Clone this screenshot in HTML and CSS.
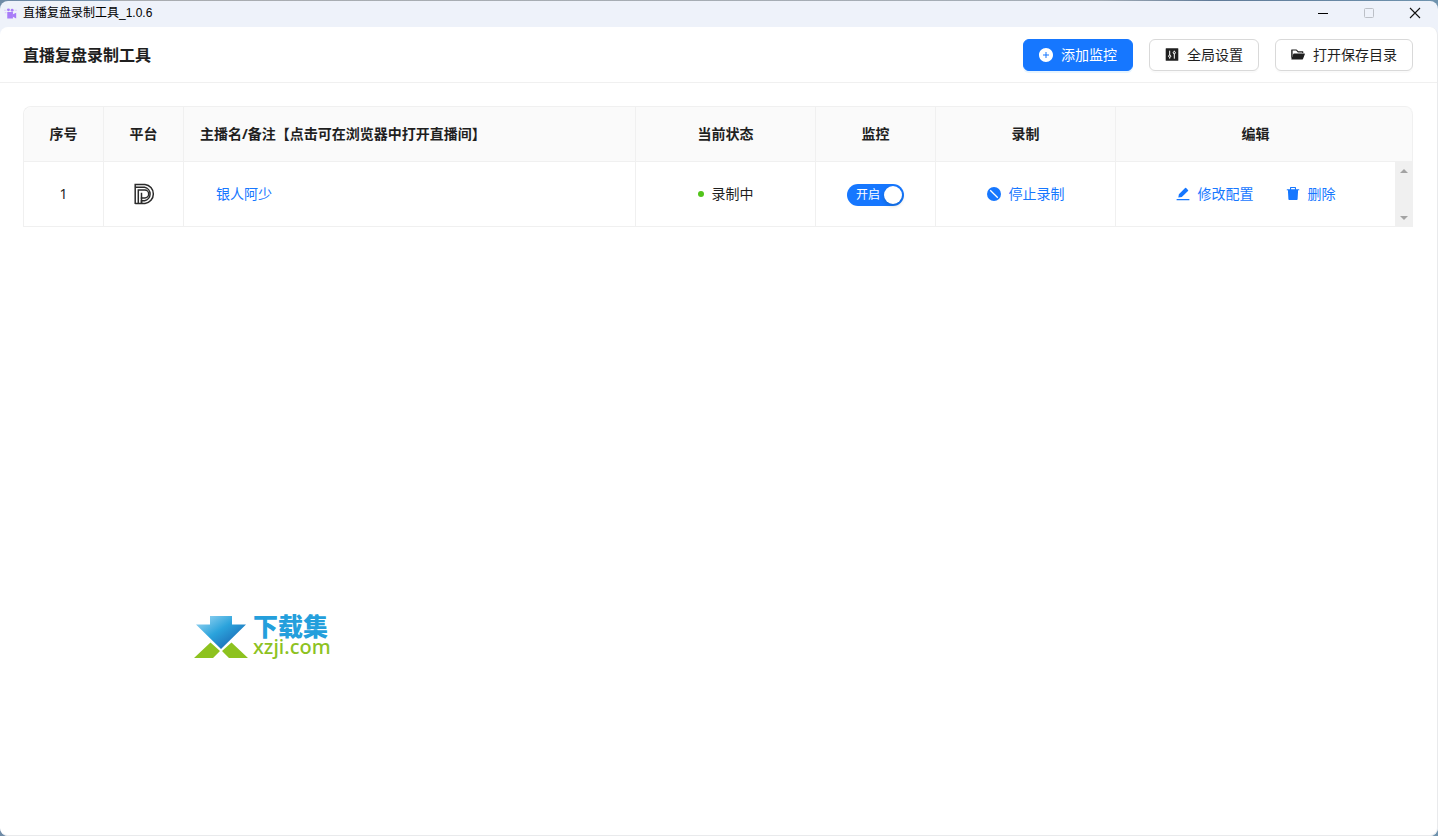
FILE: index.html
```html
<!DOCTYPE html>
<html lang="zh-CN">
<head>
<meta charset="utf-8">
<title>直播复盘录制工具</title>
<link rel="stylesheet" href="styles.css">
</head>
<body>
<div class="window">
  <div class="titlebar">
    <svg class="app-icon" viewBox="0 0 16 16" aria-hidden="true">
      <g fill="#a87cf8"><path d="M4 6h7v8H4z"/><path d="M11 9l4-2v7l-4-2z"/><circle cx="5.500" cy="3.500" r="1.800"/><circle cx="10" cy="4" r="1.800"/></g>
      <path d="M0 4h3M1 7h2M13 4h3" stroke="#dccdfc" stroke-width="1.500"/>
    </svg>
    <span class="titlebar-text">直播复盘录制工具_1.0.6</span>
    <div class="window-controls">
      <button type="button" aria-label="最小化"><svg viewBox="0 0 10 10"><path d="M0 5.500h10" stroke="#000"/></svg></button>
      <button type="button" aria-label="最大化" disabled><svg viewBox="0 0 10 10"><rect x=".5" y=".5" width="9" height="9" rx="1" fill="none" stroke="#bcc0c7"/></svg></button>
      <button type="button" aria-label="关闭"><svg viewBox="0 0 10 10"><path d="M0 0l10 10M10 0L0 10" stroke="#111" stroke-width="1.100"/></svg></button>
    </div>
  </div>
  <main class="page">
    <header class="header">
      <h1>直播复盘录制工具</h1>
      <div class="actions">
        <button type="button" class="btn btn-primary">
          <svg class="icon" viewBox="64 64 896 896"><path d="M512 64C264.600 64 64 264.600 64 512s200.600 448 448 448 448-200.600 448-448S759.400 64 512 64zm192 472c0 4.400-3.600 8-8 8H544v152c0 4.400-3.600 8-8 8h-48c-4.400 0-8-3.600-8-8V544H328c-4.400 0-8-3.600-8-8v-48c0-4.400 3.600-8 8-8h152V328c0-4.400 3.600-8 8-8h48c4.400 0 8 3.600 8 8v152h152c4.400 0 8 3.600 8 8v48z"/></svg>
          <span>添加监控</span>
        </button>
        <button type="button" class="btn">
          <svg class="icon" viewBox="0 0 14 14"><rect x=".7" y=".2" width="12.600" height="12.600" rx=".5"/><path d="M4.700 2.700v8M9.300 2.700v8" stroke="#fff"/><circle cx="4.700" cy="8.200" r="1.100" fill="#1f1f1f" stroke="#fff"/><circle cx="9.300" cy="4.700" r="1.100" fill="#1f1f1f" stroke="#fff"/></svg>
          <span>全局设置</span>
        </button>
        <button type="button" class="btn">
          <svg class="icon" viewBox="0 0 14 14"><path d="M.5 1.500h5l1.900 1.800h4.400q.5 0 .5.500v1.300h-1.100v-.7H6.900L5.100 2.600H1.600v5.400L.2 10.800V1.900q0-.4.300-.4z"/><path d="M2.800 5.600h10.700q.6 0 .4.500l-1.900 5q-.1.400-.6.400H.7q-.5 0-.3-.5l1.900-5q.1-.4.500-.4z"/></svg>
          <span>打开保存目录</span>
        </button>
      </div>
    </header>
    <section class="content">
      <table class="rooms">
        <colgroup>
          <col class="col-small"><col class="col-small"><col><col class="col-medium"><col class="col-switch"><col class="col-medium"><col class="col-edit"><col class="col-scroll">
        </colgroup>
        <thead>
          <tr><th>序号</th><th>平台</th><th class="name-head">主播名/备注【点击可在浏览器中打开直播间】</th><th>当前状态</th><th>监控</th><th>录制</th><th class="joined">编辑</th><td class="head-end"></td></tr>
        </thead>
        <tbody>
          <tr>
            <td>1</td>
            <td>
              <svg class="platform" viewBox="0 0 22 22" role="img" aria-label="平台图标" fill="none" stroke="#2b2b2b" stroke-width="1.500">
                <path d="M2.200 21V1.500H12a9.300 9.500 0 0 1 0 18.900H2.200"/>
                <path d="M2.200 4.300H11.600a6.600 6.800 0 0 1 0 13.400H8.500V20"/>
                <path d="M5.300 20V7.100h6.500a3.900 3.900 0 0 1 0 7.800H8.500V9.800"/>
                <path d="M8.500 14.500V20"/>
              </svg>
            </td>
            <td class="name-cell"><a href="#">银人阿少</a></td>
            <td><div class="status"><i class="dot"></i>录制中</div></td>
            <td><label class="switch"><input type="checkbox" role="switch" checked><span>开启</span></label></td>
            <td>
              <div class="row-actions">
                <button type="button" class="link">
                  <svg class="icon" viewBox="0 0 14 14"><circle cx="7" cy="7" r="7"/><path d="M3.200 3.200l7.600 7.600" stroke="#fff" stroke-width="1.300"/></svg>
                  <span>停止录制</span>
                </button>
              </div>
            </td>
            <td class="joined">
              <div class="row-actions">
                <button type="button" class="link">
                  <svg class="icon" viewBox="0 0 14 14"><path d="M.9 12h12.200q.3 0 .3.300v.9H.6v-.9q0-.3.300-.3z"/><path d="M2.300 10.600l.6-3.400L9.100 1q.5-.5 1 0l1.900 1.900q.5.500 0 1L5.800 10z"/></svg>
                  <span>修改配置</span>
                </button>
                <button type="button" class="link">
                  <svg class="icon" viewBox="0 0 14 14"><path d="M4 2.200V.7Q4 0 4.700 0h4.600q.7 0 .7.700v1.500h2.800q.5 0 .5.500v.6h-1.200l-.5 8.900q-.1.700-.8.700H3.200q-.7 0-.8-.7l-.5-8.900H.7v-.6q0-.5.500-.5zm1.100 0h3.800V1.100H5.100z"/></svg>
                  <span>删除</span>
                </button>
              </div>
            </td>
            <td class="scroll-cell">
              <div class="scrollbar" aria-hidden="true">
                <svg viewBox="0 0 8 4"><path d="M4 0l4 4H0z"/></svg>
                <svg viewBox="0 0 8 4"><path d="M0 0h8L4 4z"/></svg>
              </div>
            </td>
          </tr>
        </tbody>
      </table>
    </section>
  </main>
  <div class="watermark">
    <svg class="watermark-logo" viewBox="0 0 54 42" aria-hidden="true">
      <defs><linearGradient id="arrow" x1="0" y1="0" x2="1" y2="1"><stop offset="0" stop-color="#a8dcf5"/><stop offset=".45" stop-color="#2ba3dc"/><stop offset="1" stop-color="#1553a5"/></linearGradient></defs>
      <path d="M16 0h22v8.500h14L27 33 2 8.500h14z" fill="url(#arrow)"/>
      <path d="M0 42l16.500-15.500L26 35 19 42zM54 42L37.500 26.500 28 35l7 7z" fill="#8dc21f"/>
    </svg>
    <div class="watermark-text"><span class="watermark-name">下载集</span><span class="watermark-url">xzji.com</span></div>
  </div>
</div>
</body>
</html>
```
FILE: styles.css
```css
* { box-sizing: border-box; }
html, body { height: 100%; margin: 0; }
body {
  padding-top: 1px;
  background: linear-gradient(90deg, #6f8ba6 0, #7891aa 110px, #a9acb0 112px, #a4adb6 1100px, #607b98 1210px, #6f93ae 100%);
  color: #1f1f1f;
  font: 14px/22px "Noto Sans", "Noto Sans CJK SC", sans-serif;
}
button { font: inherit; color: inherit; cursor: pointer; }
.window {
  position: relative;
  display: flex;
  flex-direction: column;
  height: 100%;
  border-radius: 8px;
  background: #eef2fa;
  overflow: hidden;
}
.titlebar {
  display: flex;
  align-items: center;
  height: 26px;
  padding: 0 0 2px 4px;
  color: #000;
  font: 12px/24px "Liberation Sans", "Noto Sans CJK SC", sans-serif;
}
.app-icon { width: 13px; height: 13px; margin-right: 6px; }
.window-controls { display: flex; margin-left: auto; }
.window-controls button {
  display: flex;
  align-items: center;
  justify-content: center;
  width: 46px;
  height: 24px;
  padding: 0;
  border: 0;
  background: none;
}
.window-controls svg { width: 10px; height: 10px; overflow: visible; }
.page {
  flex: 1;
  border: solid #e9eaec;
  border-width: 0 1px 1px 0;
  border-radius: 8px;
  background: #fff;
}
.header {
  display: flex;
  align-items: center;
  justify-content: space-between;
  padding: 12px 24px 11px 23px;
  border-bottom: 1px solid #f0f0f0;
}
h1 { margin: 0; font-size: 16px; line-height: 24px; font-weight: 700; }
.actions { display: flex; gap: 16px; }
.btn {
  display: flex;
  align-items: center;
  gap: 8px;
  height: 32px;
  padding: 0 15px;
  border: 1px solid #d9d9d9;
  border-radius: 6px;
  background: #fff;
  box-shadow: 0 2px 0 rgba(0, 0, 0, .02);
}
.btn-primary {
  border-color: #1677ff;
  background: #1677ff;
  color: #fff;
  box-shadow: 0 2px 0 rgba(5, 145, 255, .1);
}
.icon { flex: none; width: 14px; height: 14px; fill: currentColor; }
.content { padding: 23px 24px 24px 23px; }
.rooms {
  width: 100%;
  table-layout: fixed;
  border: solid #f0f0f0;
  border-width: 1px 0 0 1px;
  border-spacing: 0;
  border-radius: 8px 8px 0 0;
}
.col-small { width: 80px; }
.col-medium { width: 180px; }
.col-switch { width: 120px; }
.col-edit { width: 279px; }
.col-scroll { width: 18px; }
.rooms th, .rooms td {
  padding: 0;
  border: solid #f0f0f0;
  border-width: 0 1px 1px 0;
  text-align: center;
  vertical-align: middle;
}
.rooms thead tr > * { height: 55px; background: #fafafa; font-weight: 700; }
.rooms tbody td { height: 65px; }
.rooms thead th:first-child { border-top-left-radius: 8px; }
.rooms .head-end { border-top-right-radius: 8px; }
.rooms .joined { border-right: 0; }
.rooms .name-head { padding-left: 16px; text-align: left; }
.rooms .name-cell { padding-left: 32px; text-align: left; }
a, .link { color: #1677ff; text-decoration: none; }
.platform { display: block; width: 22px; height: 22px; margin: 0 auto; }
.status { display: flex; align-items: center; justify-content: center; gap: 8px; }
.dot { width: 6px; height: 6px; border-radius: 50%; background: #52c41a; }
.switch {
  position: relative;
  display: flex;
  align-items: center;
  width: 57px;
  height: 22px;
  margin: 1px auto 0;
  padding-left: 9px;
  border-radius: 11px;
  background: #1677ff;
  color: #fff;
  font-size: 12px;
  cursor: pointer;
}
.switch input {
  appearance: none;
  position: absolute;
  top: 2px;
  right: 2px;
  width: 18px;
  height: 18px;
  margin: 0;
  border-radius: 50%;
  background: #fff;
  box-shadow: 0 2px 4px rgba(0, 35, 11, .2);
}
.link {
  display: inline-flex;
  align-items: center;
  gap: 8px;
  padding: 0;
  border: 0;
  background: none;
}
.row-actions { display: flex; justify-content: center; gap: 32px; }
.rooms .scroll-cell { background: #f0f0f0; }
.scrollbar {
  display: flex;
  flex-direction: column;
  align-items: center;
  justify-content: space-between;
  height: 64px;
  padding: 7px 0 6px;
}
.scrollbar svg { width: 8px; height: 4px; fill: #a3a3a3; }
.watermark {
  position: absolute;
  left: 194px;
  top: 615px;
  display: flex;
  gap: 5px;
}
.watermark-logo { width: 54px; height: 42px; }
.watermark-text { display: flex; flex-direction: column; }
.watermark-name {
  color: #249fdc;
  font-size: 25px;
  line-height: 20px;
  font-weight: 900;
}
.watermark-url { color: #8dc21f; font: 500 20px/22px "Noto Sans", sans-serif; }
```
